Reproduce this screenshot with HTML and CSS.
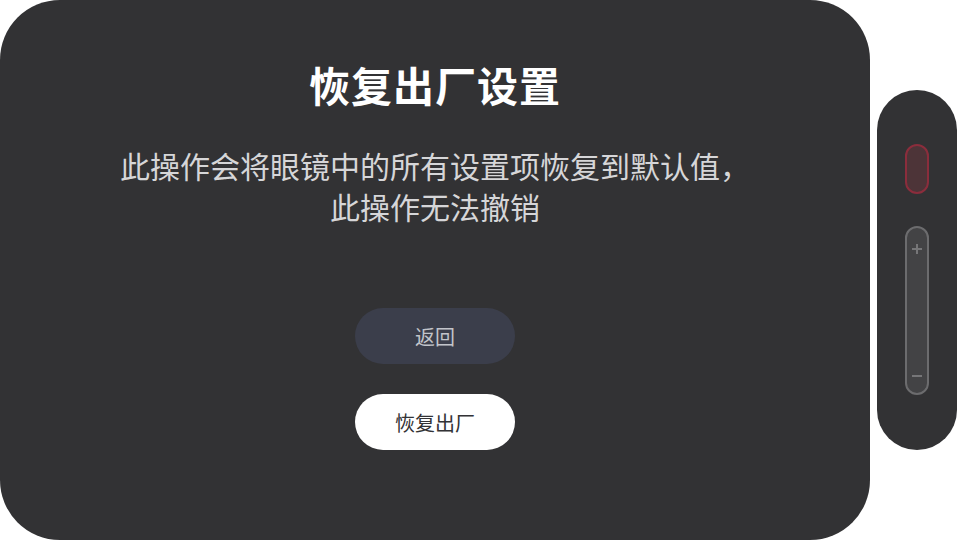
FILE: index.html
```html
<!DOCTYPE html>
<html lang="zh-CN">
<head>
<meta charset="utf-8">
<title>恢复出厂设置</title>
<link rel="stylesheet" href="styles.css">
</head>
<body>
<div class="screen">
  <main class="dialog">
    <h1 class="title">恢复出厂设置</h1>
    <p class="message">此操作会将眼镜中的所有设置项恢复到默认值，<br>此操作无法撤销</p>
    <div class="actions">
      <button class="btn btn-back">返回</button>
      <button class="btn btn-reset">恢复出厂</button>
    </div>
  </main>
  <aside class="side">
    <div class="record"></div>
    <div class="slider">
      <span class="sign plus"></span>
      <span class="sign minus"></span>
    </div>
  </aside>
</div>
</body>
</html>
```

FILE: styles.css
```css
html, body {
  margin: 0;
  padding: 0;
  background: #ffffff;
}
body {
  width: 960px;
  height: 540px;
  overflow: hidden;
  font-family: "Noto Sans CJK SC", "Noto Sans", sans-serif;
}
.screen {
  display: flex;
  align-items: center;
  gap: 7px;
  height: 540px;
}
.dialog {
  width: 870px;
  height: 540px;
  box-sizing: border-box;
  background: #323234;
  border-radius: 60px;
  display: flex;
  flex-direction: column;
  align-items: center;
  padding-top: 56px;
}
.title {
  margin: 0;
  font-size: 41px;
  line-height: 56px;
  font-weight: 700;
  color: #ffffff;
  letter-spacing: 1px;
}
.message {
  margin: 33px 0 0;
  font-size: 30px;
  line-height: 41px;
  color: #d6d6d8;
  text-align: center;
}
.actions {
  margin-top: 81px;
  display: flex;
  flex-direction: column;
  gap: 30px;
}
.btn {
  width: 160px;
  height: 56px;
  border: none;
  border-radius: 28px;
  font-family: "Noto Sans CJK SC", "Noto Sans", sans-serif;
  font-size: 20px;
  padding: 0;
}
.btn-back {
  background: #3b3e4b;
  color: #c2c4ca;
}
.btn-reset {
  background: #ffffff;
  color: #333336;
}
.side {
  width: 80px;
  height: 360px;
  box-sizing: border-box;
  background: #323234;
  border-radius: 40px;
  display: flex;
  flex-direction: column;
  align-items: center;
  padding-top: 54px;
  gap: 32px;
}
.record {
  width: 24px;
  height: 50px;
  box-sizing: border-box;
  border: 2px solid #8b2d3c;
  background: #4d3438;
  border-radius: 12px;
}
.slider {
  position: relative;
  width: 24px;
  height: 169px;
  box-sizing: border-box;
  border: 2px solid #6c6c6e;
  background: #434345;
  border-radius: 12px;
}
.sign {
  position: absolute;
  left: 5px;
  width: 10px;
  height: 2px;
  background: #767678;
}
.plus { top: 20px; }
.plus::after {
  content: "";
  position: absolute;
  left: 4px;
  top: -4px;
  width: 2px;
  height: 10px;
  background: #767678;
}
.minus { top: 147px; }
```
